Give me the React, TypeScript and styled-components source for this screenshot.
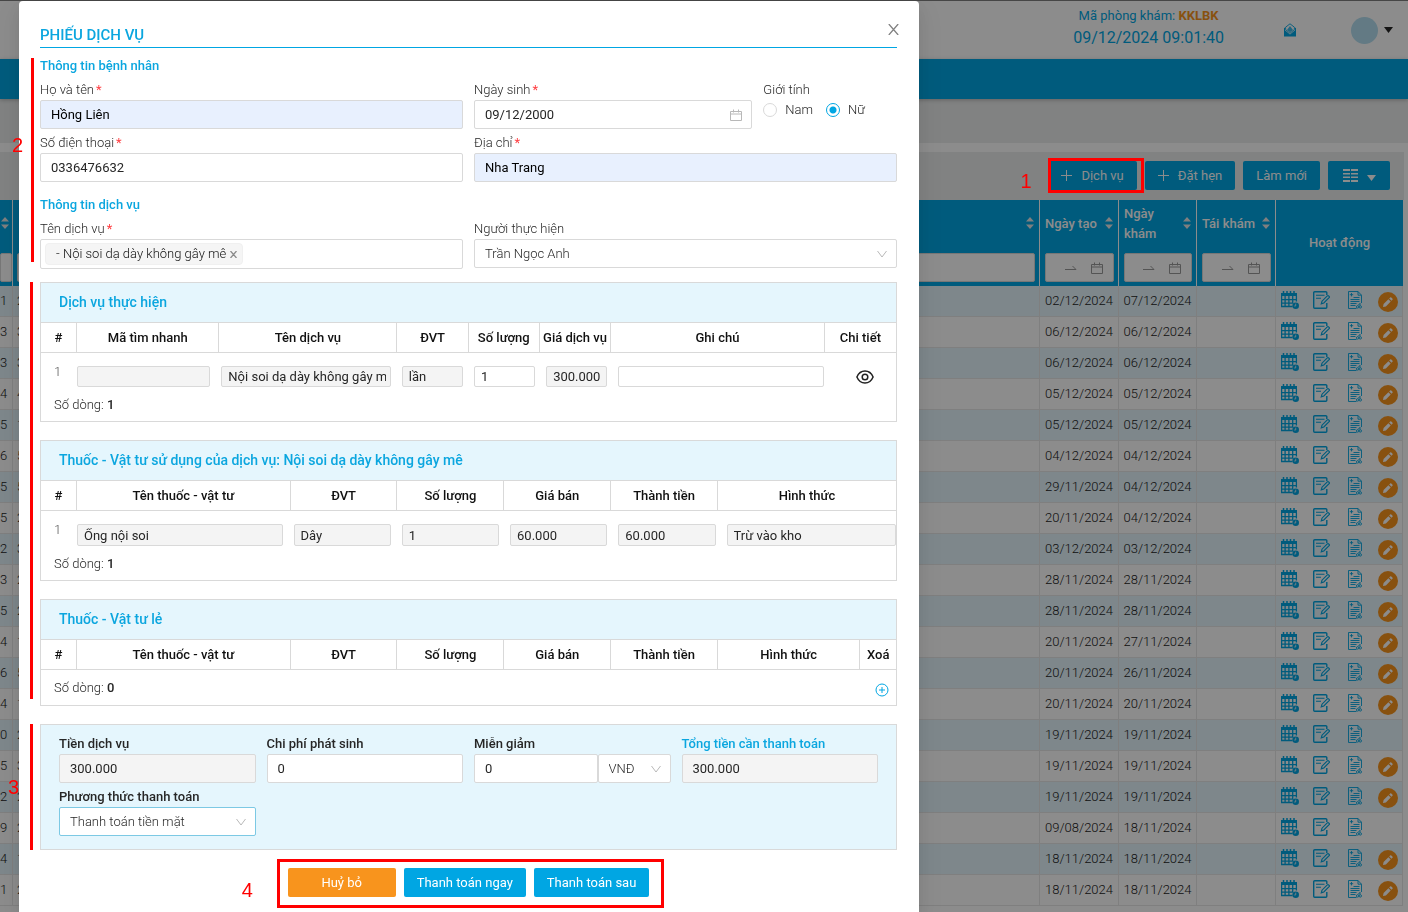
import React from "react";
import styled, { createGlobalStyle, css } from "styled-components";

const BLUE = "#00a6e3";
const ORANGE = "#f8941d";
const LINE = "#d9d9d9";

const Global = createGlobalStyle`
  *, *::before, *::after { box-sizing: border-box; }
  body {
    margin: 0;
    background: #fff;
    color: #262626;
    font-family: Roboto, "Noto Sans", sans-serif;
    font-size: 13px;
    line-height: 20px;
    font-weight: 300;
    overflow: hidden;
  }
  input, select, button { font: inherit; color: inherit; margin: 0; }
`;

/* ---------- Page under the dialog ---------- */

const Page = styled.div`
  min-height: 100vh;
  border-top: 1px solid #808080;
`;

const TopBar = styled.header`
  display: flex;
  justify-content: flex-end;
  align-items: center;
  height: 58px;
  padding-right: 15px;
`;

const Clinic = styled.div`
  display: flex;
  flex-direction: column;
  align-items: center;
  color: ${BLUE};
  font-weight: 400;
  padding-bottom: 5px;
  margin-right: 60px;
`;

const ClinicCode = styled.strong`
  color: ${ORANGE};
  font-weight: 700;
`;

const Clock = styled.time`
  font-size: 16px;
  line-height: 24px;
`;

const PlainButton = styled.button`
  display: inline-flex;
  align-items: center;
  justify-content: center;
  padding: 0;
  border: 0;
  background: none;
  cursor: pointer;
`;

const MailButton = styled(PlainButton)`
  color: ${BLUE};
  margin-right: 55px;
`;

const Account = styled(PlainButton)`
  gap: 6px;
`;

const Avatar = styled.span`
  width: 27px;
  height: 27px;
  border-radius: 50%;
  background: #b5dff0;
`;

const NavBar = styled.nav`
  position: relative;
  height: 40px;
  background: ${BLUE};
  box-shadow: 0 1px 4px rgba(0, 0, 0, 0.25);
`;

const Band = styled.div`
  height: 44px;
  background: #ebeded;
`;

const Listing = styled.main`
  padding: 9px 4px 0 0;
`;

const Toolbar = styled.div`
  display: flex;
  justify-content: flex-end;
  align-items: flex-start;
  gap: 8px;
  height: 48px;
  padding: 9px 14px 0 0;
  background: #ebeded;
`;

const ToolButton = styled.button`
  display: inline-flex;
  align-items: center;
  justify-content: center;
  gap: 9px;
  height: 29px;
  padding: 0 13px;
  border: 0;
  border-radius: 2px;
  background: ${BLUE};
  color: #fff;
  font-weight: 400;
`;

const MenuToolButton = styled(ToolButton)`
  width: 62px;
  & > svg:last-child { margin-top: 4px; }
`;

const Marked = styled.div`
  position: relative;
  display: flex;
`;

const MarkNumber = styled.span<{ $left: number; $top: string }>`
  position: absolute;
  left: ${(p) => p.$left}px;
  top: ${(p) => p.$top};
  z-index: 20;
  color: #f00;
  font: 400 20px/24px "Liberation Sans", sans-serif;
`;

const MarkFrame = styled.span<{ $inset: string }>`
  position: absolute;
  inset: ${(p) => p.$inset};
  z-index: 20;
  border: 3px solid #f00;
  pointer-events: none;
`;

const List = styled.table`
  width: calc(100% - 1px);
  table-layout: fixed;
  border-collapse: separate;
  border-spacing: 0;
`;

const Col = styled.col<{ $w?: number }>`
  ${(p) => p.$w && css`width: ${p.$w}px;`}
`;

const HeadCell = styled.th`
  height: 86px;
  padding: 0 4px;
  background: ${BLUE};
  border-right: 1px solid #fff;
  color: #fff;
  font-weight: 500;
  text-align: left;
  vertical-align: top;
  overflow: hidden;
  &:first-child { padding-left: 0; }
  &:last-child {
    border-right: 0;
    text-align: center;
    vertical-align: middle;
  }
`;

const HeadTitle = styled.div`
  display: flex;
  align-items: center;
  justify-content: space-between;
  height: 48px;
  padding: 0 1px;
  margin-bottom: 5px;
  & > svg { margin: 0 0 2px auto; flex: none; }
`;

const Filter = styled.label<{ $inset?: boolean }>`
  display: flex;
  align-items: center;
  justify-content: flex-end;
  gap: 14px;
  height: 29px;
  margin-left: ${(p) => (p.$inset ? 1 : 0)}px;
  padding-right: 10px;
  border: 1px solid ${LINE};
  border-radius: 2px;
  background: #fff;
  color: #9a9a9a;
`;

const FilterInput = styled.input`
  min-width: 0;
  flex: 1;
  width: 0;
  height: 20px;
  padding: 0;
  border: 0;
  background: none;
  outline: 0;
`;

const Row = styled.tr`
  &:nth-child(odd) td { background: #e5f6fd; }
`;

const Cell = styled.td<{ $align?: string }>`
  height: 31px;
  padding: 0;
  border-right: 1px solid #e8e8e8;
  border-bottom: 1px solid #e8e8e8;
  text-align: ${(p) => p.$align || "left"};
  color: #222;
  &:nth-child(2) { padding-left: 4px; }
`;

const Actions = styled.div`
  display: grid;
  grid-template-columns: 32px 35px 30px 20px;
  align-items: start;
  padding: 5px 0 0 5px;
  height: 30px;
  color: ${BLUE};
`;

const ActionButton = styled(PlainButton)`
  justify-content: flex-start;
`;

const EditButton = styled(PlainButton)`
  width: 20px;
  height: 20px;
  margin-top: 1px;
  border-radius: 50%;
  background: ${ORANGE};
  color: #fff;
`;

/* ---------- Dialog ---------- */

const Backdrop = styled.div`
  position: fixed;
  inset: 0;
  z-index: 10;
  padding: 1px 19px 0;
  background: rgba(0, 0, 0, 0.45);
  overflow: auto;
`;

const Dialog = styled.section`
  position: relative;
  max-width: 900px;
  min-height: calc(100vh - 1px);
  padding: 0 22px 4px 21px;
  background: #fff;
  border-radius: 4px 4px 0 0;
  box-shadow: 0 3px 6px -4px rgba(0, 0, 0, 0.12), 0 6px 16px rgba(0, 0, 0, 0.08),
    0 9px 28px 8px rgba(0, 0, 0, 0.05);
`;

const DialogHead = styled.header`
  display: flex;
  justify-content: space-between;
  align-items: flex-end;
  height: 47px;
  padding-bottom: 2px;
  border-bottom: 1px solid ${BLUE};
`;

const DialogTitle = styled.h1`
  margin: 0;
  color: #0ba6df;
  font-size: 15px;
  line-height: 20px;
  font-weight: 500;
`;

const CloseButton = styled(PlainButton)`
  margin: 0 -2px 10px 0;
  color: #808080;
`;

const Block = styled.div`
  position: relative;
  &::before {
    content: "";
    position: absolute;
    left: -10px;
    top: 0;
    bottom: 0;
    width: 3px;
    background: #f00;
  }
`;

const FormBlock = styled(Block)`
  margin-top: 8px;
  &::before { left: -9px; top: 2px; bottom: 7px; }
`;

const TablesBlock = styled(Block)`
  display: grid;
  gap: 18px;
  margin-top: 13px;
  &::before { bottom: 7px; }
`;

const GroupTitle = styled.h2`
  margin: 0 0 4px;
  color: #0ba6df;
  font-size: 13px;
  line-height: 20px;
  font-weight: 500;
`;

const FormGrid = styled.div`
  display: grid;
  grid-template-columns: repeat(12, minmax(0, 1fr));
  gap: 4px 11px;
  & + ${GroupTitle} { margin-top: 13px; }
`;

const Field = styled.div<{ $span: number }>`
  grid-column: span ${(p) => p.$span};
`;

const Label = styled.label<{ $strong?: boolean; $accent?: boolean }>`
  display: block;
  height: 20px;
  font-weight: ${(p) => (p.$strong ? 500 : 300)};
  ${(p) => p.$accent && css`color: #0ba6df;`}
`;

const Required = styled.span`
  margin-left: 2px;
  color: #ff3b3f;
  font-weight: 400;
`;

const control = css`
  width: 100%;
  height: 29px;
  padding: 0 10px;
  border: 1px solid ${LINE};
  border-radius: 2px;
  outline: 0;
  background: #fff;
`;

const TextBox = styled.input<{ $filled?: boolean }>`
  ${control}
  display: block;
  font-weight: 400;
  ${(p) => p.$filled && css`background: #e8f0fe; color: #000;`}
  &:disabled { background: #f4f4f4; color: #262626; }
`;

const Wrap = styled.div`
  position: relative;
  & > svg {
    position: absolute;
    right: 10px;
    top: 50%;
    transform: translateY(-50%);
    color: #b8b8b8;
    pointer-events: none;
  }
`;

const SelectBox = styled.select<{ $focus?: boolean }>`
  ${control}
  display: block;
  appearance: none;
  ${(p) => p.$focus && css`&& { border-color: #7cc9e4; }`}
`;

const Pair = styled.div`
  display: grid;
  grid-template-columns: minmax(0, 1fr) 73px;
`;

const Radios = styled.fieldset`
  margin: 0;
  padding: 0;
  border: 0;
`;

const Legend = styled.legend`
  height: 20px;
  padding: 0;
`;

const RadioRow = styled.div`
  display: flex;
  gap: 13px;
`;

const RadioLabel = styled.label`
  display: flex;
  align-items: center;
  gap: 8px;
`;

const Radio = styled.input`
  appearance: none;
  width: 14px;
  height: 14px;
  border: 1px solid ${LINE};
  border-radius: 50%;
  &:checked {
    border-color: ${BLUE};
    background: radial-gradient(circle, ${BLUE} 0 3px, #fff 4px);
  }
`;

const TagBox = styled.div`
  ${control}
  display: flex;
  align-items: center;
  height: 30px;
  padding: 0 4px;
`;

const Tag = styled.span`
  display: inline-flex;
  align-items: center;
  gap: 4px;
  height: 22px;
  padding: 0 5px 0 10px;
  border: 1px solid #f0f0f0;
  border-radius: 4px;
  background: #f5f5f5;
  color: #111;
  white-space: nowrap;
  & > button { color: #8a8a8a; }
`;

const Card = styled.section`
  border: 1px solid ${LINE};
`;

const CardTitle = styled.h2`
  margin: 0;
  padding: 0 18px;
  border-bottom: 1px solid ${LINE};
  background: #e5f6fd;
  color: #0ba6df;
  font-size: 14px;
  line-height: 39px;
  font-weight: 500;
`;

const Sheet = styled.table`
  display: block;
  width: 100%;
  & > thead, & > tbody { display: block; }
`;

const SheetHead = styled.tr`
  display: grid;
  grid-template-columns: 36px repeat(23, minmax(0, 1fr));
  border-bottom: 1px solid ${LINE};
`;

const SheetTh = styled.th<{ $span: number }>`
  grid-column: span ${(p) => p.$span};
  height: 29px;
  padding: 0;
  border-right: 1px solid ${LINE};
  color: #111;
  font-weight: 500;
  line-height: 29px;
  white-space: nowrap;
  &:last-child { border-right: 0; }
`;

const SheetRow = styled.tr`
  display: grid;
  grid-template-columns: 25px repeat(23, minmax(0, 1fr));
  column-gap: 11px;
  padding-top: 13px;
`;

const SheetTd = styled.td<{ $span: number }>`
  grid-column: span ${(p) => p.$span};
  display: flex;
  justify-content: center;
  padding: 0;
`;

const IndexTd = styled.td`
  height: 12px;
  padding: 0 0 0 13px;
  line-height: 12px;
  color: #555;
`;

const CellBox = styled(TextBox)<{ $tall?: boolean }>`
  height: ${(p) => (p.$tall ? 22 : 21)}px;
  padding: 0 4px 0 6px;
`;

const SheetFoot = styled.footer`
  display: flex;
  align-items: center;
  justify-content: space-between;
  height: 34px;
  padding: 1px 7px 0 13px;
`;

const AddFoot = styled(SheetFoot)`
  height: 35px;
  & > button { color: ${BLUE}; margin-top: 4px; }
`;

const Count = styled.b`
  font-weight: 500;
`;

const Payment = styled(Block)`
  margin-top: 18px;
`;

const PaymentCard = styled(Card)`
  display: grid;
  grid-template-columns: repeat(4, minmax(0, 1fr));
  gap: 4px 11px;
  padding: 9px 18px 13px;
  background: #e5f6fd;
`;

const Footer = styled.footer`
  display: flex;
  justify-content: center;
  margin-top: 18px;
`;

const FooterButtons = styled(Marked)`
  gap: 8px;
`;

const FooterButton = styled.button<{ $kind?: "cancel" }>`
  height: 29px;
  padding: 0 13px;
  border: 0;
  border-radius: 2px;
  background: ${BLUE};
  color: #fff;
  font-weight: 400;
  ${(p) => p.$kind === "cancel" && css`width: 108px; background: ${ORANGE};`}
`;

/* ---------- Icons ---------- */

const Caret = ({ size = 9 }: { size?: number }) => (
  <svg width={size} height="6" viewBox="0 0 9 6" aria-hidden="true">
    <path d="M0 0h9L4.5 6z" fill="currentColor" />
  </svg>
);

const Chevron = () => (
  <svg width="10" height="8" viewBox="0 0 10 8" fill="none" stroke="currentColor" aria-hidden="true">
    <path d="M.5 1 5 7l4.5-6" />
  </svg>
);

const SortIcon = () => (
  <svg width="8" height="12" viewBox="0 0 8 12" fill="#e8e8e8" aria-hidden="true">
    <path d="M0 4.5 4 0l4 4.5zM0 7.5 4 12l4-4.5z" />
  </svg>
);

const CalendarOutline = () => (
  <svg width="12" height="12" viewBox="0 0 12 12" fill="none" stroke="currentColor" aria-hidden="true">
    <path d="M.5 2.5h11v9H.5zM.5 5h11M3.5.5v3M8.500.5v3" />
  </svg>
);

const RangeArrow = () => (
  <svg width="12" height="6" viewBox="0 0 12 6" fill="none" stroke="currentColor" aria-hidden="true">
    <path d="M0 4.500h11L7.500 1" />
  </svg>
);

const PlusIcon = () => (
  <svg width="11" height="11" viewBox="0 0 11 11" stroke="currentColor" aria-hidden="true">
    <path d="M5.500 0v11M0 5.500h11" />
  </svg>
);

const ColumnsIcon = () => (
  <svg width="15" height="13" viewBox="0 0 15 13" fill="currentColor" aria-hidden="true">
    <path d="M0 0h7v2H0zM8 0h7v2H8zM0 4h7v1.500H0zM8 4h7v1.500H8zM0 7.500h7V9H0zM8 7.500h7V9H8zM0 11h7v2H0zM8 11h7v2H8z" />
  </svg>
);

const MailIcon = () => (
  <svg width="12" height="14" viewBox="0 0 12 14" aria-hidden="true">
    <path d="M0 5.200l1-.8v2.900l5 4.200 5-4.200V4.400l1 .8V13.500H0z" fill="currentColor" />
    <path d="M1.600 6.600V4.200L6 .8l4.400 3.400v2.400L6 10.300z" fill="none" stroke="currentColor" strokeWidth=".9" />
    <path d="M6 3 9 7 6 9.300 3 7z" fill="currentColor" opacity=".75" />
  </svg>
);

const ScheduleIcon = () => (
  <svg width="18" height="18" viewBox="0 0 18 18" aria-hidden="true">
    <path d="M2.500 0v3M6 0v3M9.500 0v3M13 0v3" stroke="currentColor" strokeWidth="1.500" />
    <path d="M0 2h16v3H0z" fill="currentColor" />
    <path d="M.6 5v10.500h11M4.100 5v10.500M7.900 5v10.500M11.700 5v7.500M15.400 5v5.500M0 8.600h16M0 12.100h12" fill="none" stroke="currentColor" strokeWidth="1.300" />
    <circle cx="14.700" cy="14.700" r="3.300" fill="currentColor" />
    <path d="M14.700 12.700v2.300h-1.500" fill="none" stroke="#d8e8f0" strokeWidth=".9" />
  </svg>
);

const NoteIcon = () => (
  <svg width="17" height="18" viewBox="0 0 17 18" fill="none" stroke="currentColor" strokeWidth="1.400" aria-hidden="true">
    <path d="M13.800 4V1.700a1 1 0 0 0-1-1H1.700a1 1 0 0 0-1 1v14.600a1 1 0 0 0 1 1h11.100a1 1 0 0 0 1-1V12" />
    <path d="M3 4.300h8.500M3 7.300h5" strokeWidth="1.100" />
    <path d="m8.300 12.800.7-2.600 5.300-5.300c.9-.9 2.700.8 1.800 1.800l-5.300 5.300z" strokeWidth="1.200" />
  </svg>
);

const ReportIcon = () => (
  <svg width="14" height="18" viewBox="0 0 14 18" fill="none" stroke="currentColor" strokeWidth=".9" aria-hidden="true">
    <path d="M13.500 12V4.200L10 .5H.5v17h8M10 .5v3.700h3.500" />
    <path d="M3.500 2v3.400M1.800 3.700h3.400M5.500 6.500h6M2.500 8.500h9M2.500 10.500h9M2.500 12.500h6M2.500 14.500h5" />
    <circle cx="9.600" cy="15.900" r="1.200" />
    <circle cx="12.300" cy="15.900" r="1.200" />
    <path d="m10 14.500 2-2.200v2.400" />
  </svg>
);

const PencilIcon = () => (
  <svg width="10" height="10" viewBox="0 0 10 10" fill="currentColor" aria-hidden="true">
    <path d="M0 10l.6-2.900 4.800-4.800 2.300 2.300-4.800 4.800zM6.200 1.500 7.400.3c.5-.5 2.800 1.800 2.300 2.300L8.500 3.800z" />
  </svg>
);

const EyeIcon = () => (
  <svg width="18" height="14" viewBox="0 0 18 14" fill="none" stroke="#222" strokeWidth="1.500" aria-hidden="true">
    <path d="M.9 7C2.600 3 5.600 1 9 1s6.400 2 8.100 6C15.400 11 12.400 13 9 13S2.600 11 .9 7z" />
    <circle cx="9" cy="7" r="2.800" />
  </svg>
);

const CloseIcon = ({ size = 11 }: { size?: number }) => (
  <svg width={size} height={size} viewBox="0 0 11 11" fill="none" stroke="currentColor" strokeWidth={14 / size} aria-hidden="true">
    <path d="m.8 0 9.400 11M10.200 0 .8 11" />
  </svg>
);

const AddCircle = () => (
  <svg width="14" height="14" viewBox="0 0 14 14" fill="none" stroke="currentColor" aria-hidden="true">
    <circle cx="7" cy="7" r="6" />
    <path d="M7 4v6M4 7h6" />
  </svg>
);

/* ---------- Data ---------- */

const visits: [string, string, string, string, boolean][] = [
  ["1", "2", "02/12/2024", "07/12/2024", true],
  ["3", "3", "06/12/2024", "06/12/2024", true],
  ["3", "3", "06/12/2024", "06/12/2024", true],
  ["4", "4", "05/12/2024", "05/12/2024", true],
  ["5", "1", "05/12/2024", "05/12/2024", true],
  ["6", "5", "04/12/2024", "04/12/2024", true],
  ["5", "5", "29/11/2024", "04/12/2024", true],
  ["5", "2", "20/11/2024", "04/12/2024", true],
  ["2", "3", "03/12/2024", "03/12/2024", true],
  ["3", "2", "28/11/2024", "28/11/2024", true],
  ["5", "2", "28/11/2024", "28/11/2024", true],
  ["4", "1", "20/11/2024", "27/11/2024", true],
  ["6", "5", "20/11/2024", "26/11/2024", true],
  ["4", "1", "20/11/2024", "20/11/2024", true],
  ["0", "2", "19/11/2024", "19/11/2024", false],
  ["5", "3", "19/11/2024", "19/11/2024", true],
  ["2", "2", "19/11/2024", "19/11/2024", true],
  ["9", "2", "09/08/2024", "18/11/2024", false],
  ["4", "1", "18/11/2024", "18/11/2024", true],
  ["1", "2", "18/11/2024", "18/11/2024", true],
];

type HeadDef = [string, number];

const serviceHead: HeadDef[] = [
  ["#", 1], ["Mã tìm nhanh", 4], ["Tên dịch vụ", 5], ["ĐVT", 2],
  ["Số lượng", 2], ["Giá dịch vụ", 2], ["Ghi chú", 6], ["Chi tiết", 2],
];

const supplyHead: HeadDef[] = [
  ["#", 1], ["Tên thuốc - vật tư", 6], ["ĐVT", 3], ["Số lượng", 3],
  ["Giá bán", 3], ["Thành tiền", 3], ["Hình thức", 5],
];

const looseHead: HeadDef[] = [...supplyHead.slice(0, 6), ["Hình thức", 4], ["Xoá", 1]];

const serviceCells: [string, string, number, boolean][] = [
  ["Mã tìm nhanh", "", 4, true],
  ["Tên dịch vụ", "Nội soi dạ dày không gây mê", 5, true],
  ["ĐVT", "lần", 2, true],
  ["Số lượng", "1", 2, false],
  ["Giá dịch vụ", "300.000", 2, true],
  ["Ghi chú", "", 6, false],
];

const supplyCells: [string, string, number][] = [
  ["Tên thuốc - vật tư", "Ống nội soi", 6],
  ["ĐVT", "Dây", 3],
  ["Số lượng", "1", 3],
  ["Giá bán", "60.000", 3],
  ["Thành tiền", "60.000", 3],
  ["Hình thức", "Trừ vào kho", 5],
];

/* ---------- Parts ---------- */

function SheetHeader({ cols }: { cols: HeadDef[] }) {
  return (
    <thead>
      <SheetHead>
        {cols.map(([name, span]) => (
          <SheetTh key={name} $span={span} scope="col">{name}</SheetTh>
        ))}
      </SheetHead>
    </thead>
  );
}

function DateHead({ title }: { title: string }) {
  return (
    <HeadCell scope="col">
      <HeadTitle>{title}<SortIcon /></HeadTitle>
      <Filter $inset>
        <FilterInput aria-label={title} />
        <RangeArrow />
        <CalendarOutline />
      </Filter>
    </HeadCell>
  );
}

function VisitList() {
  return (
    <List>
      <colgroup>
        <Col $w={13} />
        <Col />
        <Col $w={79} />
        <Col $w={78} />
        <Col $w={79} />
        <Col $w={127} />
      </colgroup>
      <thead>
        <tr>
          <HeadCell scope="col">
            <HeadTitle><SortIcon /></HeadTitle>
            <Filter><FilterInput aria-label="Mã" /></Filter>
          </HeadCell>
          <HeadCell scope="col">
            <HeadTitle><SortIcon /></HeadTitle>
            <Filter><FilterInput aria-label="Tên" /></Filter>
          </HeadCell>
          <DateHead title="Ngày tạo" />
          <DateHead title="Ngày khám" />
          <DateHead title="Tái khám" />
          <HeadCell scope="col">Hoạt động</HeadCell>
        </tr>
      </thead>
      <tbody>
        {visits.map(([code, lead, created, visited, editable], i) => (
          <Row key={i}>
            <Cell>{code}</Cell>
            <Cell>{lead}</Cell>
            <Cell $align="center">{created}</Cell>
            <Cell $align="center">{visited}</Cell>
            <Cell />
            <Cell>
              <Actions>
                <ActionButton aria-label="Lịch hẹn"><ScheduleIcon /></ActionButton>
                <ActionButton aria-label="Ghi chú"><NoteIcon /></ActionButton>
                <ActionButton aria-label="Phiếu khám"><ReportIcon /></ActionButton>
                {editable && <EditButton aria-label="Sửa"><PencilIcon /></EditButton>}
              </Actions>
            </Cell>
          </Row>
        ))}
      </tbody>
    </List>
  );
}

function PatientForm() {
  return (
    <FormBlock>
      <MarkNumber $left={-28} $top="77px">2</MarkNumber>
      <GroupTitle>Thông tin bệnh nhân</GroupTitle>
      <FormGrid>
        <Field $span={6}>
          <Label htmlFor="name">Họ và tên<Required>*</Required></Label>
          <TextBox id="name" $filled defaultValue="Hồng Liên" />
        </Field>
        <Field $span={4}>
          <Label htmlFor="birth">Ngày sinh<Required>*</Required></Label>
          <Wrap>
            <TextBox id="birth" defaultValue="09/12/2000" />
            <CalendarOutline />
          </Wrap>
        </Field>
        <Field $span={2}>
          <Radios>
            <Legend>Giới tính</Legend>
            <RadioRow>
              <RadioLabel><Radio type="radio" name="sex" />Nam</RadioLabel>
              <RadioLabel><Radio type="radio" name="sex" defaultChecked />Nữ</RadioLabel>
            </RadioRow>
          </Radios>
        </Field>
        <Field $span={6}>
          <Label htmlFor="phone">Số điện thoại<Required>*</Required></Label>
          <TextBox id="phone" defaultValue="0336476632" />
        </Field>
        <Field $span={6}>
          <Label htmlFor="address">Địa chỉ<Required>*</Required></Label>
          <TextBox id="address" $filled defaultValue="Nha Trang" />
        </Field>
      </FormGrid>
      <GroupTitle>Thông tin dịch vụ</GroupTitle>
      <FormGrid>
        <Field $span={6}>
          <Label htmlFor="service">Tên dịch vụ<Required>*</Required></Label>
          <TagBox>
            <Tag>
              - Nội soi dạ dày không gây mê
              <PlainButton aria-label="Xoá dịch vụ"><CloseIcon size={7} /></PlainButton>
            </Tag>
            <FilterInput id="service" />
          </TagBox>
        </Field>
        <Field $span={6}>
          <Label htmlFor="doctor">Người thực hiện</Label>
          <Wrap>
            <SelectBox id="doctor"><option>Trần Ngọc Anh</option></SelectBox>
            <Chevron />
          </Wrap>
        </Field>
      </FormGrid>
    </FormBlock>
  );
}

function ServiceTables() {
  return (
    <TablesBlock>
      <Card>
        <CardTitle>Dịch vụ thực hiện</CardTitle>
        <Sheet>
          <SheetHeader cols={serviceHead} />
          <tbody>
            <SheetRow>
              <IndexTd>1</IndexTd>
              {serviceCells.map(([name, value, span, disabled]) => (
                <SheetTd key={name} $span={span}>
                  <CellBox aria-label={name} defaultValue={value} disabled={disabled} />
                </SheetTd>
              ))}
              <SheetTd $span={2}>
                <PlainButton aria-label="Xem chi tiết"><EyeIcon /></PlainButton>
              </SheetTd>
            </SheetRow>
          </tbody>
        </Sheet>
        <SheetFoot><span>Số dòng: <Count>1</Count></span></SheetFoot>
      </Card>
      <Card>
        <CardTitle>Thuốc - Vật tư sử dụng của dịch vụ: Nội soi dạ dày không gây mê</CardTitle>
        <Sheet>
          <SheetHeader cols={supplyHead} />
          <tbody>
            <SheetRow>
              <IndexTd>1</IndexTd>
              {supplyCells.map(([name, value, span]) => (
                <SheetTd key={name} $span={span}>
                  <CellBox $tall aria-label={name} defaultValue={value} disabled />
                </SheetTd>
              ))}
            </SheetRow>
          </tbody>
        </Sheet>
        <SheetFoot><span>Số dòng: <Count>1</Count></span></SheetFoot>
      </Card>
      <Card>
        <CardTitle>Thuốc - Vật tư lẻ</CardTitle>
        <Sheet><SheetHeader cols={looseHead} /></Sheet>
        <AddFoot>
          <span>Số dòng: <Count>0</Count></span>
          <PlainButton aria-label="Thêm dòng"><AddCircle /></PlainButton>
        </AddFoot>
      </Card>
    </TablesBlock>
  );
}

function PaymentForm() {
  return (
    <Payment>
      <MarkNumber $left={-32} $top="51px">3</MarkNumber>
      <PaymentCard>
        <Field $span={1}>
          <Label $strong htmlFor="fee">Tiền dịch vụ</Label>
          <TextBox id="fee" defaultValue="300.000" disabled />
        </Field>
        <Field $span={1}>
          <Label $strong htmlFor="extra">Chi phí phát sinh</Label>
          <TextBox id="extra" defaultValue="0" />
        </Field>
        <Field $span={1}>
          <Label $strong htmlFor="discount">Miễn giảm</Label>
          <Pair>
            <TextBox id="discount" defaultValue="0" />
            <Wrap>
              <SelectBox aria-label="Đơn vị giảm"><option>VNĐ</option></SelectBox>
              <Chevron />
            </Wrap>
          </Pair>
        </Field>
        <Field $span={1}>
          <Label $strong $accent htmlFor="total">Tổng tiền cần thanh toán</Label>
          <TextBox id="total" defaultValue="300.000" disabled />
        </Field>
        <Field $span={1}>
          <Label $strong htmlFor="method">Phương thức thanh toán</Label>
          <Wrap>
            <SelectBox id="method" $focus><option>Thanh toán tiền mặt</option></SelectBox>
            <Chevron />
          </Wrap>
        </Field>
      </PaymentCard>
    </Payment>
  );
}

export default function App() {
  return (
    <>
      <Global />
      <Page>
        <TopBar>
          <Clinic>
            <span>Mã phòng khám: <ClinicCode>KKLBK</ClinicCode></span>
            <Clock>09/12/2024 09:01:40</Clock>
          </Clinic>
          <MailButton aria-label="Hộp thư"><MailIcon /></MailButton>
          <Account aria-label="Tài khoản"><Avatar /><Caret /></Account>
        </TopBar>
        <NavBar />
        <Band />
        <Listing>
          <Toolbar>
            <Marked>
              <ToolButton><PlusIcon />Dịch vụ</ToolButton>
              <MarkFrame $inset="-3px -7px -3px 0" />
              <MarkNumber $left={-28} $top="8px">1</MarkNumber>
            </Marked>
            <ToolButton><PlusIcon />Đặt hẹn</ToolButton>
            <ToolButton>Làm mới</ToolButton>
            <MenuToolButton aria-label="Cột hiển thị"><ColumnsIcon /><Caret /></MenuToolButton>
          </Toolbar>
          <VisitList />
        </Listing>
      </Page>
      <Backdrop>
        <Dialog role="dialog" aria-modal="true" aria-labelledby="dialog-title">
          <DialogHead>
            <DialogTitle id="dialog-title">PHIẾU DỊCH VỤ</DialogTitle>
            <CloseButton aria-label="Đóng"><CloseIcon /></CloseButton>
          </DialogHead>
          <PatientForm />
          <ServiceTables />
          <PaymentForm />
          <Footer>
            <FooterButtons>
              <FooterButton $kind="cancel">Huỷ bỏ</FooterButton>
              <FooterButton>Thanh toán ngay</FooterButton>
              <FooterButton>Thanh toán sau</FooterButton>
              <MarkFrame $inset="-9px -15px -11px -11px" />
              <MarkNumber $left={-46} $top="10px">4</MarkNumber>
            </FooterButtons>
          </Footer>
        </Dialog>
      </Backdrop>
    </>
  );
}
